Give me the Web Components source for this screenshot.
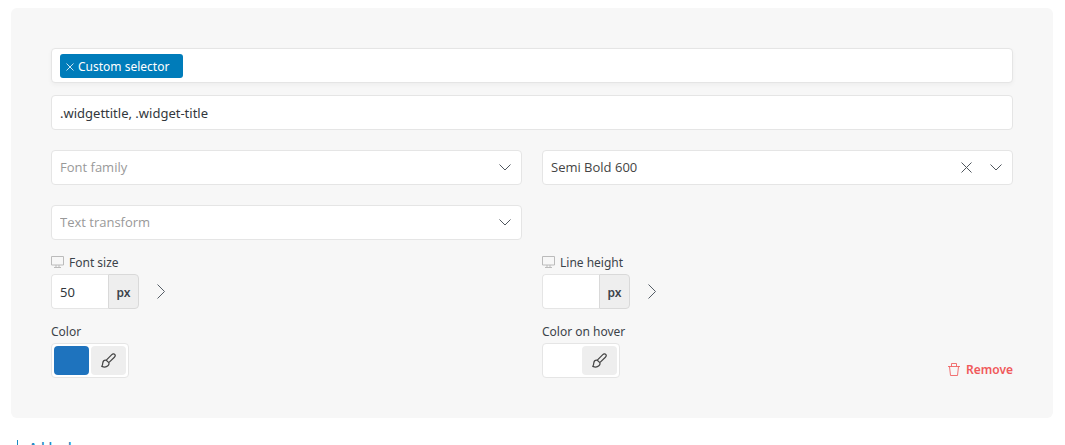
<!DOCTYPE html>
<html lang="en">
<head>
<meta charset="utf-8">
<title>Typography rule</title>
<style>
  html { height: 100%; overflow: hidden; }
  body {
    margin: 8px 12px 0 11px;
    background: #fff;
    color: #3c434a;
    font: 12px/16px "Noto Sans", "Open Sans", sans-serif;
  }
</style>
</head>
<body>
<rule-editor></rule-editor>

<script>
const base = `
  *, *::before, *::after { box-sizing: border-box; }
  button, input, select { font: inherit; color: inherit; margin: 0; padding: 0; border: 0; background: none; border-radius: 0; }
  input, select { min-width: 0; outline: 0; font-size: 13px; }
  button { cursor: pointer; }
  label { line-height: 18px; margin-bottom: 2px; }
  svg { display: block; flex: none; fill: none; stroke: currentColor; }
  .box { height: 35px; border: 1px solid #e5e5e5; border-radius: 4px; background: #fff; }
`;

function define(name, render) {
  customElements.define(name, class extends HTMLElement {
    connectedCallback() {
      if (this.shadowRoot) return;
      const template = document.createElement('template');
      template.innerHTML = render(this);
      this.attachShadow({ mode: 'open' }).append(template.content.cloneNode(true));
    }
  });
}

define('tag-field', () => `
  <style>${base}
    :host { display: block; }
    .box { display: flex; align-items: center; gap: 8px; padding: 0 8px; box-shadow: 0 2px 4px rgba(0,0,0,.04); }
    button { display: flex; align-items: center; gap: 4px; height: 24px; padding: 2px 14px 0 6px; border-radius: 3px; background: #007cba; color: #fff; }
    svg { opacity: .8; }
    input { flex: 1; }
  </style>
  <div class="box">
    <button type="button" title="Remove tag">
      <svg width="8" height="8" viewBox="0 0 8 8"><path d="M.5.5l7 7M7.5.5l-7 7"/></svg>
      <slot></slot>
    </button>
    <input type="text" aria-label="Selectors">
  </div>`);

define('text-field', el => `
  <style>${base}
    :host { display: block; }
    input.box { display: block; width: 100%; padding: 0 8px; color: #32373c; }
  </style>
  <input class="box" type="text" aria-label="${el.getAttribute('label')}" value="${el.getAttribute('value') || ''}">`);

define('select-field', el => {
  const value = el.getAttribute('value');
  return `
  <style>${base}
    :host { display: block; min-width: 0; }
    .box { display: grid; grid-template-columns: 1fr auto auto; align-items: center; column-gap: 16px; padding: 0 10px 0 8px; }
    select { grid-area: 1 / 1 / 2 / 4; width: 100%; height: 33px; padding-bottom: 2px; appearance: none; color: #444; font-family: "Open Sans", sans-serif; }
    select.empty { color: #999; }
    button { grid-area: 1 / 2; padding: 2px; }
    .chevron { grid-area: 1 / 3; pointer-events: none; }
    svg { color: #50575e; }
  </style>
  <div class="box">
    <select class="${value ? '' : 'empty'}" aria-label="${el.getAttribute('label')}">
      <option>${value || el.getAttribute('label')}</option>
    </select>
    ${value ? `<button type="button" aria-label="Clear">
      <svg width="11" height="11" viewBox="0 0 11 11"><path d="M.5.5l10 10M10.5.5l-10 10"/></svg>
    </button>` : ''}
    <svg class="chevron" width="12" height="7" viewBox="0 0 12 7"><path d="M.5.5l5.500 5.500 5.500-5.500"/></svg>
  </div>`;
});

define('unit-field', el => `
  <style>${base}
    :host { display: block; }
    label { display: flex; align-items: flex-start; gap: 5px; }
    label svg { margin-top: 2px; color: #bbb; }
    .row { display: flex; align-items: center; gap: 16px; }
    .box { display: flex; width: 88px; border: 0; }
    input { width: 57px; padding: 0 8px; border: 1px solid #e5e5e5; border-right: 0; border-radius: 4px 0 0 4px; color: #32373c; }
    .unit { flex: 1; border: 1px solid #d9d9d9; border-radius: 0 4px 4px 0; background: #eee; font-weight: 600; line-height: 35px; text-align: center; }
    .more { padding: 2px; color: #555d66; }
  </style>
  <label for="size">
    <svg width="13" height="12" viewBox="0 0 13 12"><path d="M.5.5h12v8.500H.5zM5 9v2M8 9v2M3 11.500h7"/></svg>
    <slot></slot>
  </label>
  <div class="row">
    <div class="box">
      <input id="size" type="text" inputmode="numeric" value="${el.getAttribute('value') || ''}">
      <span class="unit">px</span>
    </div>
    <button class="more" type="button" aria-label="Responsive sizes">
      <svg width="9" height="15" viewBox="0 0 9 15"><path d="M.5.5l7 7-7 7"/></svg>
    </button>
  </div>`);

define('color-field', el => `
  <style>${base}
    :host { display: block; }
    label { display: block; }
    .box { display: inline-flex; vertical-align: top; gap: 2px; padding: 2px; }
    button { display: grid; place-items: center; width: 35px; height: 29px; border-radius: 4px; }
    .swatch { background: ${el.getAttribute('value') || '#fff'}; }
    .pick { background: #eee; color: #444; }
  </style>
  <label for="swatch"><slot></slot></label>
  <div class="box">
    <button id="swatch" class="swatch" type="button"></button>
    <button class="pick" type="button" aria-label="Pick colour">
      <svg width="15" height="15" viewBox="0 0 15 15" stroke-linejoin="round" stroke-width="1.200"><path d="M5.300 7.200L10.800 1.600c1-1 2.300-1 2.900-.3s.8 1.900-.3 2.900L7.800 9.600zM5.300 7.200c-1.800-.2-3.300 1-3.500 2.700-.1 1.300-.2 2.400-1 3.500 1.800.8 4.600.8 6.100-.6 1.100-1 1.300-2.200.9-3.200"/></svg>
    </button>
  </div>`);

define('remove-button', () => `
  <style>${base}
    :host { display: block; }
    button { display: flex; align-items: center; gap: 6px; color: #f0595b; font-weight: 600; }
  </style>
  <button type="button">
    <svg width="12" height="14" viewBox="0 0 12 14"><path d="M0 3.500h12M3.500 3.500v-3h5v3M1.500 3.500l1 9h7l1-9" stroke-opacity=".85"/></svg>
    <slot></slot>
  </button>`);

define('add-button', () => `
  <style>${base}
    :host { display: block; }
    button { display: flex; align-items: flex-start; gap: 6px; color: #1a8ac4; font-weight: 600; }
  </style>
  <button type="button">
    <svg width="11" height="11" viewBox="0 0 11 11"><path d="M5.500 0v11M0 5.500h11"/></svg>
    <slot></slot>
  </button>`);

define('rule-panel', () => `
  <style>${base}
    :host { display: block; padding: 40px; border-radius: 6px; background: #f7f7f7; }
  </style>
  <slot></slot>`);

define('rule-editor', () => `
  <style>${base}
    :host { display: block; }
    .selectors { display: grid; gap: 12px; margin-bottom: 20px; }
    .grid { display: grid; grid-template-columns: minmax(0, 1fr) minmax(0, 1fr); gap: 20px; }
    .sizes { margin: 14px 0; }
    .last { display: flex; justify-content: space-between; align-items: flex-end; }
    add-button { margin: 22px 0 0 1px; }
  </style>
  <rule-panel>
    <div class="selectors">
      <tag-field>Custom selector</tag-field>
      <text-field label="Custom selector" value=".widgettitle, .widget-title"></text-field>
    </div>
    <div class="grid">
      <select-field label="Font family"></select-field>
      <select-field label="Font weight" value="Semi Bold 600"></select-field>
      <select-field label="Text transform"></select-field>
    </div>
    <div class="grid sizes">
      <unit-field value="50">Font size</unit-field>
      <unit-field>Line height</unit-field>
    </div>
    <div class="grid">
      <color-field value="#1e73be">Color</color-field>
      <div class="last">
        <color-field>Color on hover</color-field>
        <remove-button>Remove</remove-button>
      </div>
    </div>
  </rule-panel>
  <add-button>Add rule</add-button>`);
</script>
</body>
</html>
